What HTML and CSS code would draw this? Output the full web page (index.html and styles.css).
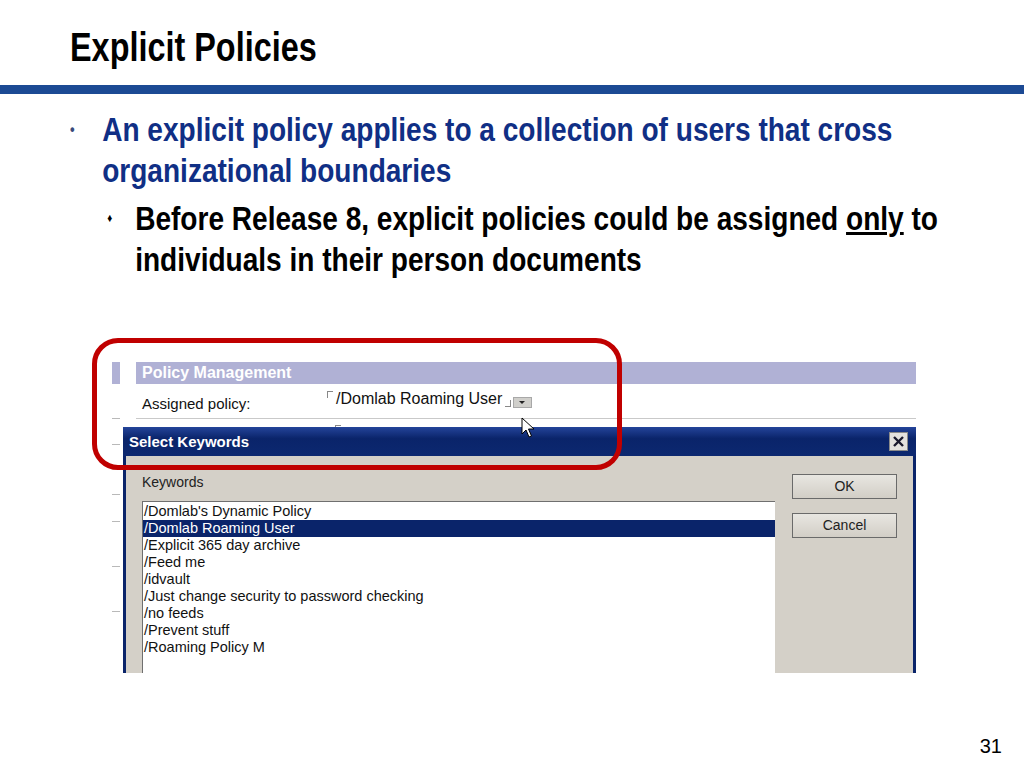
FILE: index.html
```html
<!DOCTYPE html>
<html lang="en">

<head>
    <meta charset="UTF-8">
    <title>Explicit Policies</title>
    <link rel="stylesheet" href="styles.css">
</head>

<body>
    <div class="slide">
        <h1 class="title"><span class="narrow">Explicit Policies</span></h1>
        <div class="rule"></div>

        <ul class="points">
            <li class="point">
                <span class="mark">&bull;</span>
                <div class="point-body">
                    An explicit policy applies to a collection of users that cross organizational boundaries
                    <ul class="subpoints">
                        <li class="subpoint">
                            <span class="submark">&#9830;</span>
                            <span>Before Release 8, explicit policies could be assigned <u>only</u> to<br>individuals in their person documents</span>
                        </li>
                    </ul>
                </div>
            </li>
        </ul>

        <div class="shot">
            <div class="form">
                <div class="gut head"></div>
                <div class="cell head">Policy Management</div>

                <div class="gut r1"></div>
                <div class="cell r1">
                    <span class="label">Assigned policy:</span>
                    <span class="value"><span class="fld-open"></span>/Domlab Roaming User<span class="fld-close"></span><span class="drop"></span></span>
                </div>

                <div class="gut r2"></div>
                <div class="cell r2">
                    <span class="label">Current policy:</span>
                    <span class="value"><span class="fld-open"></span></span>
                </div>

                <div class="gut r3"></div>
                <div class="cell r3"></div>
                <div class="gut r4"></div>
                <div class="cell r4"></div>
                <div class="gut r5"></div>
                <div class="cell r5"></div>
                <div class="gut r5"></div>
                <div class="cell r5"></div>
            </div>

            <div class="dialog">
                <div class="dlg-title">
                    <span>Select Keywords</span>
                    <span class="dlg-close">
                        <svg width="13" height="13" viewBox="0 0 13 13">
                            <path d="M2 2 L11 11 M11 2 L2 11" stroke="#1a1a2e" stroke-width="2.4" />
                        </svg>
                    </span>
                </div>
                <div class="dlg-body">
                    <div class="dlg-main">
                        <div class="dlg-label">Keywords</div>
                        <ul class="keywords">
                            <li>/Domlab's Dynamic Policy</li>
                            <li class="selected">/Domlab Roaming User</li>
                            <li>/Explicit 365 day archive</li>
                            <li>/Feed me</li>
                            <li>/idvault</li>
                            <li>/Just change security to password checking</li>
                            <li>/no feeds</li>
                            <li>/Prevent stuff</li>
                            <li>/Roaming Policy M</li>
                        </ul>
                    </div>
                    <div class="dlg-buttons">
                        <div class="btn">OK</div>
                        <div class="btn">Cancel</div>
                    </div>
                </div>
            </div>

            <svg class="cursor" width="14" height="23" viewBox="0 0 14 23">
                <path d="M1 1 L1 17 L5 13 L8 20 L10.5 19 L7.5 12 L13 12 Z" fill="#fff" stroke="#000" stroke-width="1" stroke-linejoin="round" />
            </svg>

            <div class="ring"></div>
        </div>

        <div class="page-num">31</div>
    </div>
</body>

</html>
```

FILE: styles.css
```css
body {
    margin: 0;
    background: #fff;
}

.slide {
    width: 1024px;
    height: 768px;
    display: flex;
    flex-direction: column;
    overflow: hidden;
    font-family: "Liberation Sans", Arial, sans-serif;
}

/* no narrow face installed, so squeeze the regular bold one */
.title {
    margin: 0;
    padding: 23px 0 0 70px;
    font-size: 40px;
    line-height: 48px;
    font-weight: bold;
    color: #000;
}

.narrow {
    display: inline-block;
    transform: scaleX(0.81);
    transform-origin: left top;
}

.rule {
    height: 9px;
    margin-top: 14px;
    background: #1c4a94;
}

.points {
    list-style: none;
    margin: 15px 0 0 70px;
    padding: 0;
    width: 1080px;
    flex: none;
    transform: scaleX(0.825);
    transform-origin: left top;
}

.point {
    display: flex;
    color: #102f85;
    font-size: 34px;
    line-height: 41px;
    font-weight: bold;
}

.mark {
    width: 39px;
    flex: none;
    font-size: 16px;
    color: #3a4a7a;
}

.subpoints {
    list-style: none;
    margin: 7px 0 0;
    padding: 0;
}

.subpoint {
    display: flex;
    color: #000;
}

.submark {
    width: 40px;
    flex: none;
    font-size: 12px;
    padding-left: 6px;
    box-sizing: border-box;
}

/* screenshot */
.shot {
    position: relative;
    margin: 82px 0 0 112px;
    width: 804px;
    height: 311px;
    flex: none;
}

.form {
    display: grid;
    grid-template-columns: 8px 780px;
    grid-template-rows: 22px 35px 26px 50px 27px 45px 45px;
    column-gap: 16px;
}

.gut {
    border-bottom: 1px solid #b9b9b9;
}

.gut.head,
.cell.head {
    background: #b0b1d5;
    border: none;
}

.cell.head {
    color: #fff;
    font-weight: bold;
    font-size: 16px;
    line-height: 22px;
    padding-left: 6px;
}

.cell {
    border-bottom: 1px solid #c9c9c9;
    display: flex;
    overflow: hidden;
    font-size: 15px;
    color: #111;
}

.label {
    width: 185px;
    padding: 11px 0 0 6px;
    flex: none;
}

.value {
    padding-top: 6px;
    display: flex;
    align-items: flex-start;
    font-size: 16px;
}

.r2 .label {
    margin-top: 5px;
    padding: 0 0 0 6px;
    height: 3px;
    overflow: hidden;
}

.r2 .value {
    padding: 5px 0 0 8px;
}

.fld-open {
    width: 5px;
    height: 6px;
    border-left: 1px solid #888;
    border-top: 1px solid #888;
    margin: 1px 3px 0 0;
}

.fld-close {
    width: 5px;
    height: 6px;
    border-right: 1px solid #888;
    border-bottom: 1px solid #888;
    margin: 10px 0 0 3px;
}

.drop {
    position: relative;
    width: 17px;
    height: 9px;
    margin: 7px 0 0 2px;
    background: #d0cfcb;
    border: 1px solid #a8a8a8;
}

.drop::after {
    content: "";
    position: absolute;
    left: 5px;
    top: 3px;
    border-left: 3px solid transparent;
    border-right: 3px solid transparent;
    border-top: 3px solid #222;
}

.dialog {
    position: absolute;
    left: 11px;
    top: 65px;
    width: 793px;
    height: 246px;
    display: flex;
    flex-direction: column;
    overflow: hidden;
    font-size: 14px;
}

.dlg-title {
    height: 29px;
    flex: none;
    display: flex;
    align-items: center;
    justify-content: space-between;
    padding: 0 8px 0 6px;
    background: linear-gradient(#24449a, #0a246a 40%, #0c2870);
    color: #fff;
    font-weight: bold;
    font-size: 15px;
}

.dlg-close {
    width: 19px;
    height: 19px;
    display: flex;
    align-items: center;
    justify-content: center;
    background: #e4e2de;
    border: 1px solid #8a8a8a;
    box-sizing: border-box;
}

.dlg-body {
    flex: 1;
    display: flex;
    align-items: flex-start;
    padding: 18px 0 0 16px;
    background: #d4d0c8;
    border-left: 3px solid #0a246a;
    border-right: 3px solid #0a246a;
}

.dlg-main {
    width: 633px;
}

.dlg-label {
    line-height: 17px;
    color: #222;
}

.keywords {
    list-style: none;
    margin: 10px 0 0;
    padding: 1px 0 0;
    height: 200px;
    background: #fff;
    border-top: 1px solid #6f6f6f;
    border-left: 1px solid #6f6f6f;
    color: #111;
    font-size: 14.5px;
}

.keywords li {
    line-height: 17px;
    padding-left: 1px;
}

.keywords .selected {
    background: #0a246a;
    color: #fff;
}

.dlg-buttons {
    width: 105px;
    margin-left: 17px;
    display: flex;
    flex-direction: column;
    gap: 14px;
}

.btn {
    height: 25px;
    line-height: 23px;
    text-align: center;
    background: linear-gradient(#e8e6e1, #d2cec6);
    border: 1px solid #6a6a6a;
    box-sizing: border-box;
    color: #222;
}

.cursor {
    position: absolute;
    left: 409px;
    top: 55px;
}

.ring {
    position: absolute;
    left: -20px;
    top: -24px;
    width: 530px;
    height: 132px;
    border: 5px solid #c00000;
    border-radius: 26px;
    box-sizing: border-box;
}

.page-num {
    margin-top: auto;
    align-self: flex-end;
    padding: 0 22px 10px 0;
    font-size: 20px;
    line-height: 23px;
}
```
